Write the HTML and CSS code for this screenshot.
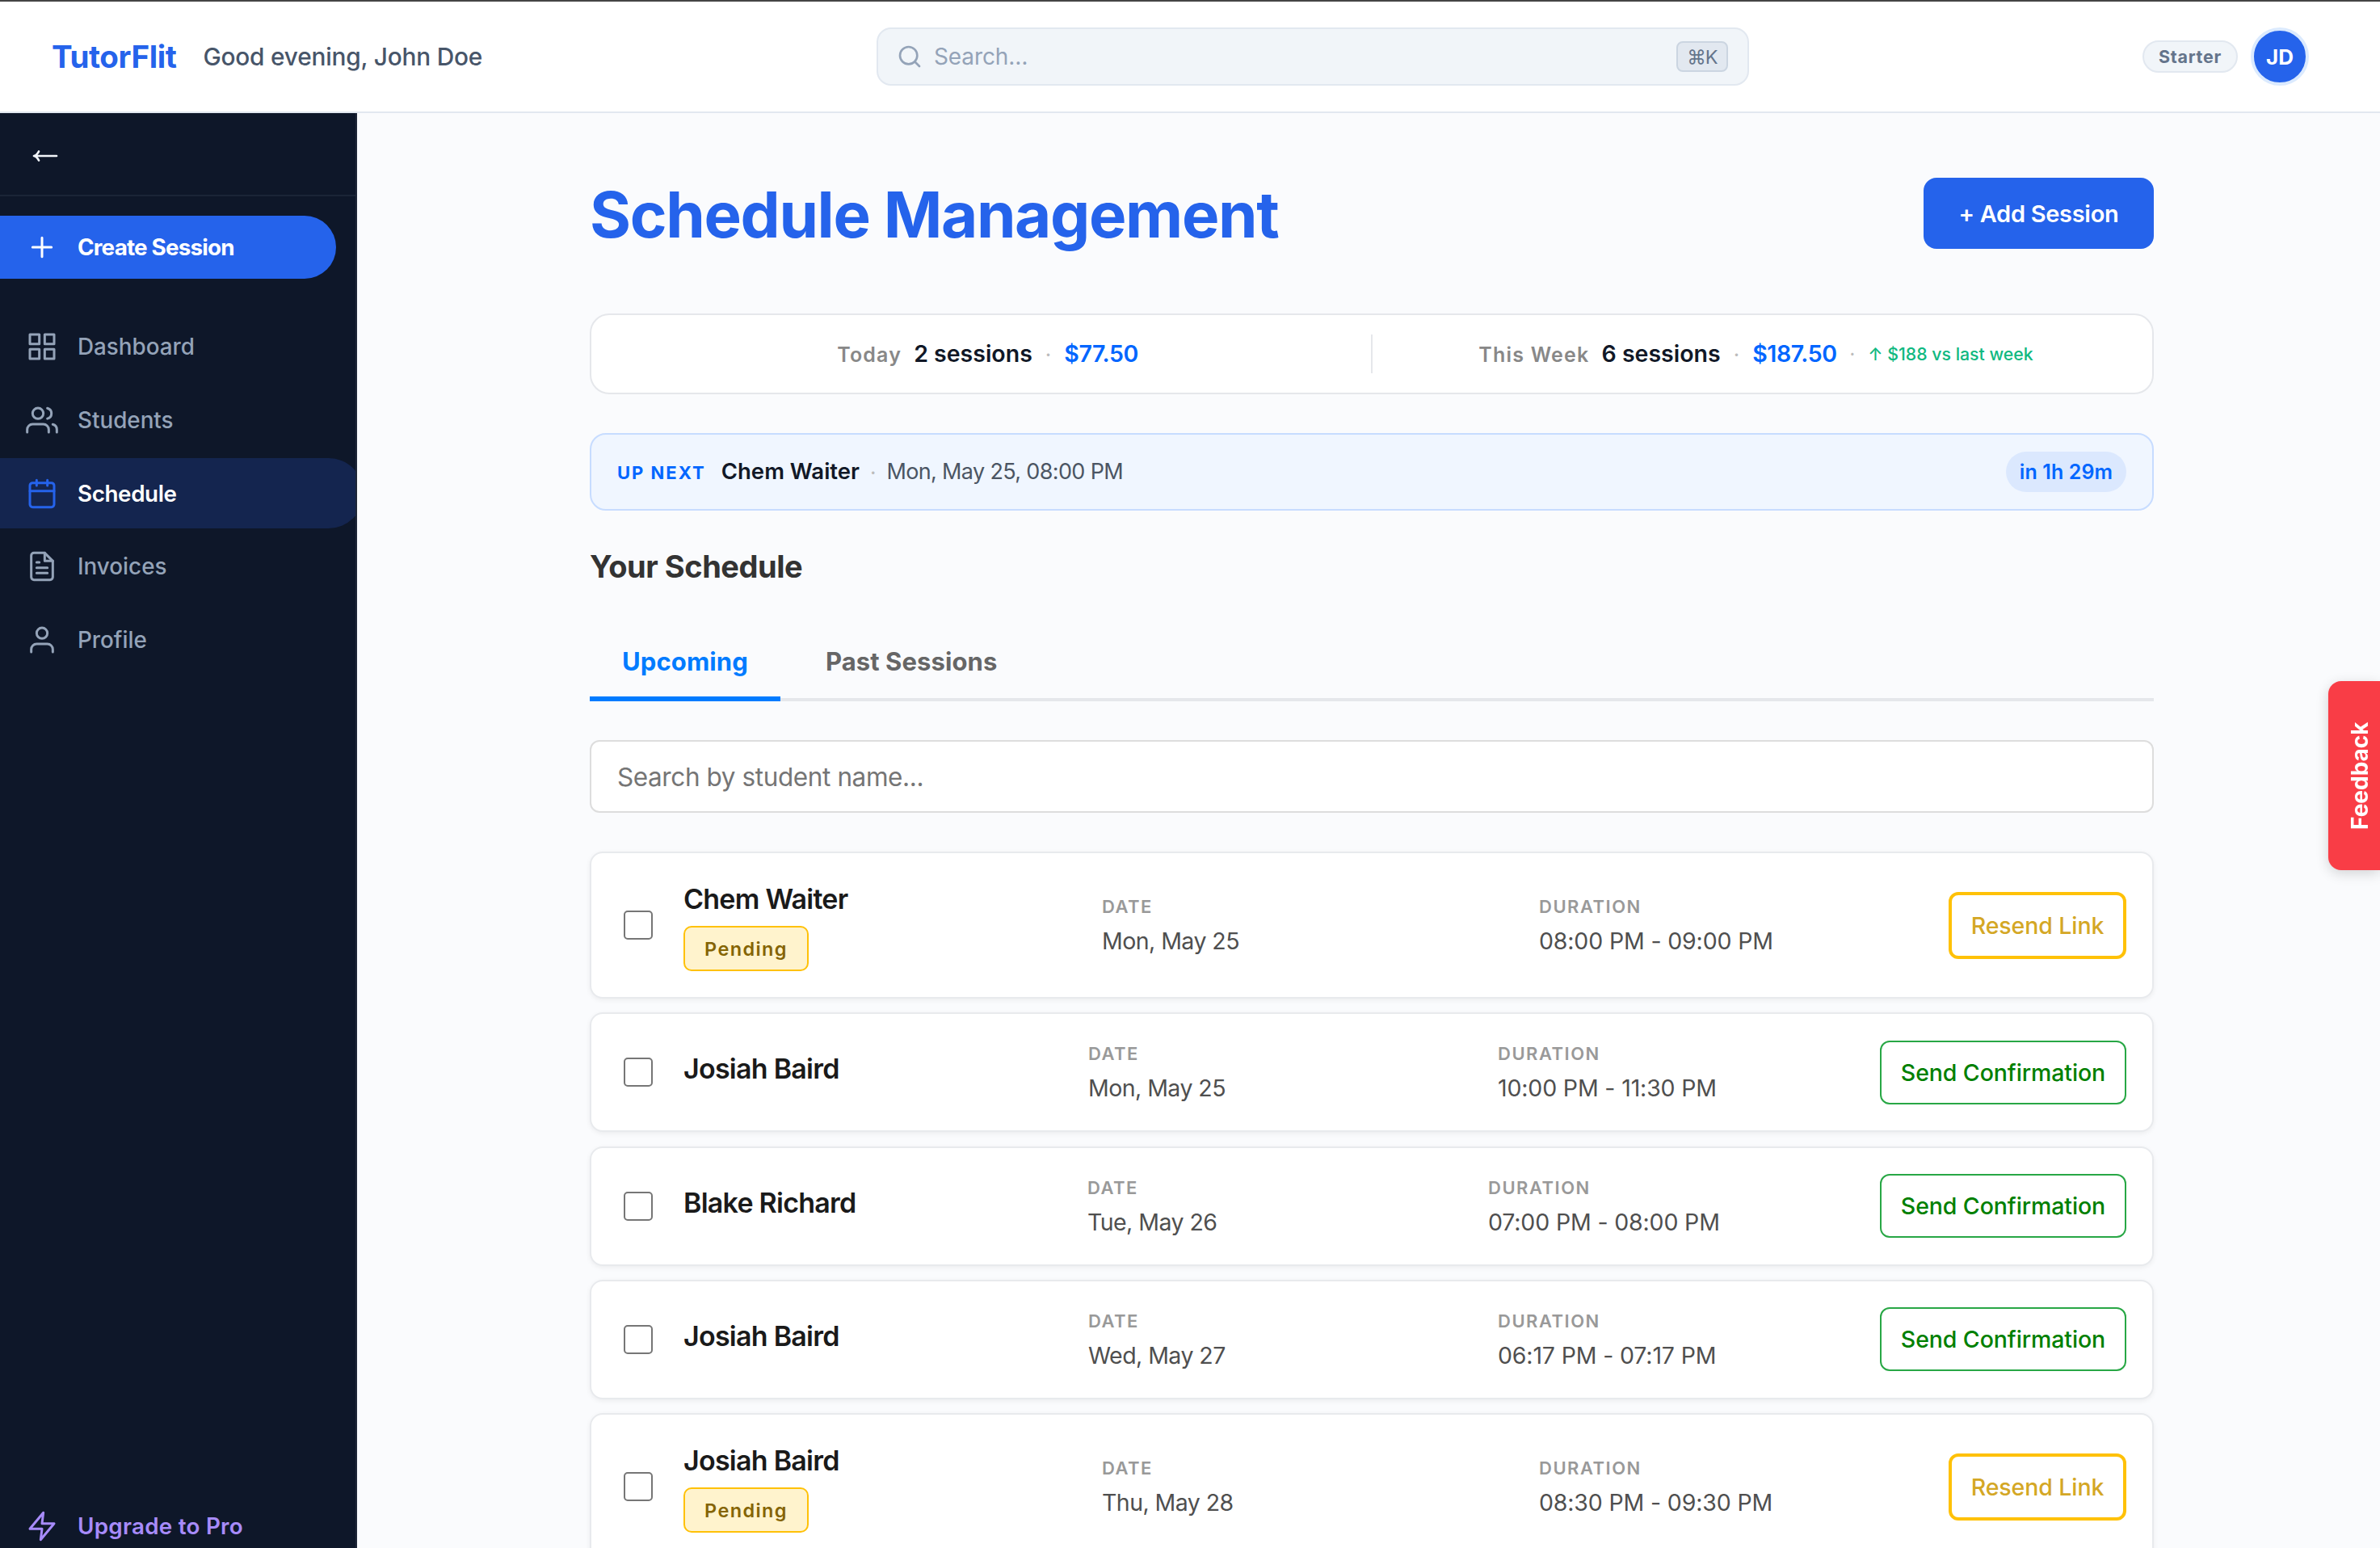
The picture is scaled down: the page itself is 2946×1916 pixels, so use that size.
FILE: index.html
```html
<!DOCTYPE html>
<html lang="en">
<head>
    <meta charset="UTF-8">
    <meta name="viewport" content="width=device-width, initial-scale=1.0">
    <title>TutorFlit - Schedule Management</title>
    <link rel="stylesheet" href="styles.css">
</head>
<body>
    <header class="topbar">
        <div class="topbar-left">
            <span class="logo">TutorFlit</span>
            <span class="greeting">Good evening, John Doe</span>
        </div>
        <div class="global-search">
            <svg class="search-icon" viewBox="0 0 24 24"><circle cx="11" cy="11" r="8"/><path d="m21 21-4.3-4.3"/></svg>
            <span class="global-search-text">Search…</span>
            <kbd>⌘K</kbd>
        </div>
        <div class="topbar-right">
            <span class="plan">Starter</span>
            <span class="avatar">JD</span>
        </div>
    </header>

    <div class="layout">
        <aside class="sidebar">
            <div class="sidebar-top">
                <svg class="back-arrow" viewBox="0 0 32 16"><path d="M30 8H2M8 2.5C6.500 5.500 4.500 7.500 2 8c2.500.500 4.500 2.500 6 5.500"/></svg>
            </div>
            <a class="create-btn">
                <svg class="icon" viewBox="0 0 24 24"><path d="M5 12h14M12 5v14"/></svg>
                <span>Create Session</span>
            </a>
            <nav class="nav">
                <a class="nav-item">
                    <svg class="icon" viewBox="0 0 24 24"><rect x="3" y="3" width="7" height="7"/><rect x="14" y="3" width="7" height="7"/><rect x="14" y="14" width="7" height="7"/><rect x="3" y="14" width="7" height="7"/></svg>
                    <span>Dashboard</span>
                </a>
                <a class="nav-item">
                    <svg class="icon" viewBox="0 0 24 24"><path d="M17 21v-2a4 4 0 0 0-4-4H5a4 4 0 0 0-4 4v2"/><circle cx="9" cy="7" r="4"/><path d="M23 21v-2a4 4 0 0 0-3-3.870M16 3.130a4 4 0 0 1 0 7.750"/></svg>
                    <span>Students</span>
                </a>
                <a class="nav-item active">
                    <svg class="icon" viewBox="0 0 24 24"><rect x="3" y="4" width="18" height="18" rx="2"/><path d="M16 2v4M8 2v4M3 10h18"/></svg>
                    <span>Schedule</span>
                </a>
                <a class="nav-item">
                    <svg class="icon" viewBox="0 0 24 24"><path d="M14 2H6a2 2 0 0 0-2 2v16a2 2 0 0 0 2 2h12a2 2 0 0 0 2-2V8z"/><path d="M14 2v6h6M16 13H8M16 17H8M10 9H8"/></svg>
                    <span>Invoices</span>
                </a>
                <a class="nav-item">
                    <svg class="icon" viewBox="0 0 24 24"><path d="M20 21v-2a4 4 0 0 0-4-4H8a4 4 0 0 0-4 4v2"/><circle cx="12" cy="7" r="4"/></svg>
                    <span>Profile</span>
                </a>
            </nav>
            <a class="upgrade">
                <svg class="icon" viewBox="0 0 24 24"><path d="M13 2 3 14h9l-1 8 10-12h-9l1-8z"/></svg>
                <span>Upgrade to Pro</span>
            </a>
        </aside>

        <main class="main">
            <div class="page-header">
                <h1>Schedule Management</h1>
                <button class="add-btn">+ Add Session</button>
            </div>

            <div class="stats">
                <div class="stat today">
                    <span class="stat-label">Today</span>
                    <span class="stat-value">2 sessions</span>
                    <span class="dot">·</span>
                    <span class="stat-money">$77.50</span>
                </div>
                <div class="stat-divider"></div>
                <div class="stat week">
                    <span class="stat-label">This Week</span>
                    <span class="stat-value">6 sessions</span>
                    <span class="dot">·</span>
                    <span class="stat-money">$187.50</span>
                    <span class="stat-trend"><span class="dot">·</span>↑ $188 vs last week</span>
                </div>
            </div>

            <div class="up-next">
                <span class="up-next-label">UP NEXT</span>
                <span class="up-next-name">Chem Waiter</span>
                <span class="dot">·</span>
                <span class="up-next-date">Mon, May 25, 08:00 PM</span>
                <span class="countdown">in 1h 29m</span>
            </div>

            <h2>Your Schedule</h2>

            <div class="tabs">
                <button class="tab active">Upcoming</button>
                <button class="tab">Past Sessions</button>
            </div>

            <input class="student-search" type="text" placeholder="Search by student name...">

            <div class="sessions">
                <div class="session pending">
                    <span class="checkbox"></span>
                    <div class="student">
                        <div class="student-name">Chem Waiter</div>
                        <span class="badge">Pending</span>
                    </div>
                    <div class="field date">
                        <div class="field-label">DATE</div>
                        <div class="field-value">Mon, May 25</div>
                    </div>
                    <div class="field">
                        <div class="field-label">DURATION</div>
                        <div class="field-value">08:00 PM - 09:00 PM</div>
                    </div>
                    <button class="resend-btn">Resend Link</button>
                </div>

                <div class="session">
                    <span class="checkbox"></span>
                    <div class="student">
                        <div class="student-name">Josiah Baird</div>
                    </div>
                    <div class="field date">
                        <div class="field-label">DATE</div>
                        <div class="field-value">Mon, May 25</div>
                    </div>
                    <div class="field">
                        <div class="field-label">DURATION</div>
                        <div class="field-value">10:00 PM - 11:30 PM</div>
                    </div>
                    <button class="confirm-btn">Send Confirmation</button>
                </div>

                <div class="session narrow-date">
                    <span class="checkbox"></span>
                    <div class="student">
                        <div class="student-name">Blake Richard</div>
                    </div>
                    <div class="field date">
                        <div class="field-label">DATE</div>
                        <div class="field-value">Tue, May 26</div>
                    </div>
                    <div class="field">
                        <div class="field-label">DURATION</div>
                        <div class="field-value">07:00 PM - 08:00 PM</div>
                    </div>
                    <button class="confirm-btn">Send Confirmation</button>
                </div>

                <div class="session">
                    <span class="checkbox"></span>
                    <div class="student">
                        <div class="student-name">Josiah Baird</div>
                    </div>
                    <div class="field date">
                        <div class="field-label">DATE</div>
                        <div class="field-value">Wed, May 27</div>
                    </div>
                    <div class="field">
                        <div class="field-label">DURATION</div>
                        <div class="field-value">06:17 PM - 07:17 PM</div>
                    </div>
                    <button class="confirm-btn">Send Confirmation</button>
                </div>

                <div class="session pending">
                    <span class="checkbox"></span>
                    <div class="student">
                        <div class="student-name">Josiah Baird</div>
                        <span class="badge">Pending</span>
                    </div>
                    <div class="field date">
                        <div class="field-label">DATE</div>
                        <div class="field-value">Thu, May 28</div>
                    </div>
                    <div class="field">
                        <div class="field-label">DURATION</div>
                        <div class="field-value">08:30 PM - 09:30 PM</div>
                    </div>
                    <button class="resend-btn">Resend Link</button>
                </div>
            </div>
        </main>
    </div>

    <button class="feedback">Feedback</button>
</body>
</html>
```
FILE: styles.css
```css
* {
    margin: 0;
    padding: 0;
    box-sizing: border-box;
}

body {
    height: 100vh;
    display: flex;
    flex-direction: column;
    overflow: hidden;
    background: #fafbfd;
    color: #111827;
    font-family: Inter, "Liberation Sans", sans-serif;
}

button,
input,
kbd {
    font-family: inherit;
}

button {
    white-space: nowrap;
}

/* Top bar */
.topbar {
    height: 140px;
    flex-shrink: 0;
    display: flex;
    align-items: center;
    padding: 0 88px 0 64px;
    background: #fff;
    border-top: 2px solid #444;
    border-bottom: 2px solid #e2e8f0;
}

.topbar-left {
    width: 1021px;
    display: flex;
    align-items: center;
    gap: 33px;
    white-space: nowrap;
}

.logo {
    font-size: 38.5px;
    font-weight: 700;
    letter-spacing: -0.4px;
    color: #2563eb;
}

.greeting {
    font-size: 29.8px;
    font-weight: 500;
    letter-spacing: -0.2px;
    color: #475569;
}

.global-search {
    width: 1080px;
    height: 72px;
    display: flex;
    align-items: center;
    padding: 0 24px 0 23px;
    background: #f1f5f9;
    border: 2px solid #e2e8f0;
    border-radius: 18px;
    color: #94a3b8;
}

.search-icon {
    width: 32px;
    height: 32px;
    margin-right: 14px;
    fill: none;
    stroke: currentColor;
    stroke-width: 2;
    stroke-linecap: round;
}

.global-search-text {
    flex: 1;
    font-size: 28px;
    letter-spacing: -0.1px;
}

kbd {
    width: 64px;
    height: 38px;
    display: flex;
    align-items: center;
    justify-content: center;
    background: #e2e8f0;
    border: 2px solid #cbd5e1;
    border-radius: 8px;
    color: #64748b;
    font-size: 23.5px;
    letter-spacing: -1px;
}

.topbar-right {
    display: flex;
    align-items: center;
    gap: 16px;
    margin-left: auto;
}

.plan {
    width: 118px;
    height: 40px;
    display: flex;
    align-items: center;
    justify-content: center;
    padding-bottom: 1px;
    background: #f1f5f9;
    border: 2px solid #e2e8f0;
    border-radius: 20px;
    color: #64748b;
    font-size: 21.5px;
    font-weight: 700;
    letter-spacing: 0.7px;
}

.avatar {
    width: 72px;
    height: 72px;
    display: flex;
    align-items: center;
    justify-content: center;
    background: #2563eb;
    border: 4px solid #dbeafe;
    border-radius: 50%;
    color: #fff;
    font-size: 26px;
    font-weight: 700;
}

.layout {
    flex: 1;
    min-height: 0;
    display: flex;
}

/* Sidebar */
.sidebar {
    width: 442px;
    flex-shrink: 0;
    display: flex;
    flex-direction: column;
    overflow: hidden;
    background: #0e1729;
    border-right: 2px solid #1e2638;
    font-size: 27.8px;
    font-weight: 500;
    color: #94a3b8;
}

.sidebar-top {
    height: 103px;
    flex-shrink: 0;
    display: flex;
    align-items: center;
    padding: 5px 0 0 40px;
    border-bottom: 2px solid #1b2537;
}

.back-arrow {
    width: 32px;
    height: 16px;
    fill: none;
    stroke: #f1f5f9;
    stroke-width: 2.7;
    stroke-linecap: round;
    stroke-linejoin: round;
}

.icon {
    width: 40px;
    height: 40px;
    flex-shrink: 0;
    fill: none;
    stroke: currentColor;
    stroke-width: 1.8;
    stroke-linecap: round;
    stroke-linejoin: round;
}

.create-btn {
    width: 416px;
    height: 78px;
    flex-shrink: 0;
    display: flex;
    align-items: center;
    gap: 24px;
    margin-top: 24px;
    padding: 0 0 1px 32px;
    background: #2563eb;
    border-radius: 0 39px 39px 0;
    color: #fff;
    font-weight: 700;
    letter-spacing: -0.8px;
}

.nav {
    display: flex;
    flex-direction: column;
    gap: 4px;
    margin-top: 41px;
}

.nav-item {
    width: 450px;
    height: 86.7px;
    display: flex;
    align-items: center;
    gap: 24px;
    padding-left: 32px;
    border-radius: 0 44px 44px 0;
}

.nav-item.active {
    background: #14254f;
    color: #fff;
    font-weight: 600;
    letter-spacing: -0.4px;
}

.nav-item.active .icon {
    stroke: #2563eb;
}

.upgrade {
    height: 54px;
    display: flex;
    align-items: center;
    gap: 24px;
    margin-top: auto;
    padding-left: 32px;
    color: #a78bfa;
    font-weight: 600;
    letter-spacing: 0.25px;
}

/* Main content */
.main {
    width: 1936px;
    margin-left: 288px;
    padding-top: 80px;
}

.page-header {
    height: 88px;
    display: flex;
    align-items: center;
    justify-content: space-between;
    margin-bottom: 80px;
}

h1 {
    padding-top: 3px;
    font-size: 78px;
    font-weight: 700;
    letter-spacing: -1.35px;
    color: #2563eb;
}

.add-btn {
    width: 285px;
    height: 88px;
    background: #2563eb;
    border: none;
    border-radius: 16px;
    color: #fff;
    font-size: 29px;
    font-weight: 600;
    letter-spacing: -0.3px;
}

.stats {
    height: 100px;
    display: flex;
    align-items: center;
    background: #fff;
    border: 2px solid #e5e7eb;
    border-radius: 24px;
}

.stat {
    flex: 1;
    display: flex;
    align-items: baseline;
    justify-content: center;
    padding-bottom: 1px;
    white-space: nowrap;
}

.stat.today {
    padding-left: 16px;
}

.stat.week {
    padding-right: 16px;
}

.stat-divider {
    width: 2px;
    height: 48px;
    background: #e5e7eb;
}

.stat-label {
    margin-right: 15px;
    color: #888;
    font-size: 25px;
    font-weight: 600;
    letter-spacing: 1.2px;
}

.stat-value {
    font-size: 28.5px;
    font-weight: 600;
}

.dot {
    margin: 0 16px;
    color: #bbb;
    font-size: 26px;
}

.stat-money {
    color: #0066ff;
    font-size: 28.5px;
    font-weight: 600;
    letter-spacing: -0.4px;
}

.stat-trend {
    align-self: center;
    color: #10b981;
    font-size: 21.3px;
    font-weight: 500;
}

.stat-trend .dot {
    font-size: 22px;
}

.up-next {
    height: 96px;
    display: flex;
    align-items: center;
    margin-top: 48px;
    padding: 0 32px;
    background: #f0f6ff;
    border: 2px solid #c7dcff;
    border-radius: 20px;
}

.up-next-label {
    margin-right: 19px;
    padding-top: 2px;
    color: #0066ff;
    font-size: 22px;
    font-weight: 700;
    letter-spacing: 2px;
}

.up-next-name {
    padding-bottom: 2px;
    font-size: 27.5px;
    font-weight: 600;
}

.up-next .dot {
    margin: 0 13px;
}

.up-next-date {
    padding-bottom: 2px;
    color: #4b5563;
    font-size: 27px;
    letter-spacing: -0.65px;
}

.countdown {
    width: 149px;
    height: 50px;
    display: flex;
    align-items: center;
    justify-content: center;
    margin-left: auto;
    background: #dbe8fe;
    border-radius: 25px;
    color: #0066ff;
    font-size: 25px;
    font-weight: 600;
    letter-spacing: 0.1px;
}

h2 {
    margin-top: 39px;
    color: #333;
    font-size: 38px;
    font-weight: 700;
    line-height: 60px;
    letter-spacing: -0.45px;
}

.tabs {
    height: 98px;
    display: flex;
    margin: 39px 0 48px;
    border-bottom: 4px solid #e5e7eb;
}

.tab {
    height: 98px;
    padding: 5px 40px 0;
    background: none;
    border: none;
    border-bottom: 6px solid transparent;
    color: #666;
    font-size: 31px;
    font-weight: 700;
    letter-spacing: 0.1px;
}

.tab + .tab {
    margin-left: 16px;
}

.tab.active {
    color: #007bff;
    border-bottom-color: #007bff;
}

.student-search {
    width: 100%;
    height: 90px;
    padding: 0 32px;
    background: #fff;
    border: 2px solid #ddd;
    border-radius: 12px;
    font-size: 31.5px;
    letter-spacing: -0.4px;
}

.student-search::placeholder {
    color: #757575;
}

/* Session list */
.sessions {
    display: flex;
    flex-direction: column;
    gap: 17.3px;
    margin-top: 48px;
}

.session {
    height: 148px;
    flex-shrink: 0;
    display: grid;
    grid-template-columns: 74px 501px 507px 1fr auto;
    align-items: center;
    padding: 0 32px 0 40px;
    background: #fff;
    border: 2px solid #e8eaed;
    border-radius: 16px;
    box-shadow: 0 2px 6px rgba(0, 0, 0, 0.06);
}

.session.narrow-date {
    grid-template-columns: 74px 500px 496px 1fr auto;
}

.session.pending {
    height: 182px;
    grid-template-columns: 74px 518px 541px 1fr auto;
}

.session > :last-child {
    grid-column: 5;
}

.checkbox {
    width: 36px;
    height: 36px;
    background: #fff;
    border: 2px solid #767676;
    border-radius: 5px;
}

.student-name {
    margin-bottom: 8px;
    color: #1a1a1a;
    font-size: 34px;
    font-weight: 600;
    line-height: 50px;
    letter-spacing: -0.75px;
}

.badge {
    width: 155px;
    height: 56px;
    display: flex;
    align-items: center;
    justify-content: center;
    padding-top: 1px;
    background: #fff3cd;
    border: 2px solid #ffc107;
    border-radius: 10px;
    color: #856404;
    font-size: 23.5px;
    font-weight: 600;
    letter-spacing: 1.4px;
}

.field {
    white-space: nowrap;
}

.field-label {
    margin-bottom: 6px;
    color: #999;
    font-size: 22px;
    font-weight: 600;
    line-height: 34px;
    letter-spacing: 1.5px;
}

.field-value {
    color: #4f4f4f;
    font-size: 28.5px;
    line-height: 40px;
    letter-spacing: -0.15px;
}

.field.date .field-value {
    letter-spacing: -0.55px;
}

.resend-btn,
.confirm-btn {
    background: #fff;
    border-radius: 12px;
    font-size: 28.5px;
    font-weight: 500;
    letter-spacing: -0.1px;
}

.resend-btn {
    width: 220px;
    height: 83px;
    border: 4px solid #ffc107;
    color: #d4a725;
}

.confirm-btn {
    width: 305px;
    height: 79px;
    border: 2px solid #28a745;
    color: #008000;
}

/* Side tab pinned to the right edge, turned so the text reads bottom to top */
.feedback {
    position: fixed;
    top: 843px;
    right: 0;
    width: 64px;
    height: 234px;
    padding-right: 15px;
    background: #f93d46;
    border: none;
    border-radius: 0 16px 16px 0;
    box-shadow: 0 -4px 16px rgba(0, 0, 0, 0.16);
    color: #fff;
    font-size: 28px;
    font-weight: 700;
    writing-mode: vertical-rl;
    transform: rotate(180deg);
}
```
